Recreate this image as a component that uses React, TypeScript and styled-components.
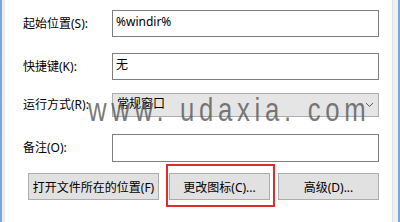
import React from 'react';
import styled, { createGlobalStyle } from 'styled-components';

const GlobalStyle = createGlobalStyle`
  html, body {
    margin: 0;
    padding: 0;
    width: 400px;
    height: 222px;
    overflow: hidden;
    background: #ffffff;
  }
  body {
    font-family: "Noto Sans", "Noto Sans CJK SC", sans-serif;
    font-size: 12px;
    color: #000;
  }
`;

const Frame = styled.div`
  position: relative;
  display: flex;
  width: 400px;
  height: 222px;
`;

const LeftEdge = styled.div`
  width: 3px;
  border-left: 2px solid #7aa7dc;
  background: #ededed;
`;

const RightEdge = styled.div`
  width: 5px;
  border-left: 1px solid #e2e2e2;
  border-right: 2px solid #7aa7dc;
  background: #f0f0f0;
`;

const Panel = styled.div`
  flex: 1;
  background: #ffffff;
  padding: 10px 13px 0 18px;
  display: flex;
  flex-direction: column;
`;

const Row = styled.div<{ $top: number }>`
  display: grid;
  grid-template-columns: 89px 1fr;
  align-items: center;
  margin-top: ${({ $top }) => $top}px;
`;

const Label = styled.span`
  line-height: 16px;
  white-space: nowrap;
`;

const TextBox = styled.div<{ $h: number }>`
  box-sizing: border-box;
  height: ${({ $h }) => $h}px;
  border: 1px solid #7f7f7f;
  background: #fff;
  padding: 2px 3px 0;
  line-height: 18px;
`;

const Combo = styled.div`
  box-sizing: border-box;
  height: 24px;
  border: 1px solid #adadad;
  background: #e5e5e5;
  padding: 1px 4px 4px;
  display: flex;
  align-items: center;
  justify-content: space-between;
  line-height: 18px;
`;

const Chevron = styled.svg`
  width: 9px;
  height: 6px;
  margin-top: 3px;
`;

const Buttons = styled.div`
  display: flex;
  margin-top: 11px;
  padding-left: 5px;
`;

const Button = styled.div<{ $w: number; $gap: number }>`
  position: relative;
  box-sizing: border-box;
  width: ${({ $w }) => $w}px;
  height: 27px;
  margin-left: ${({ $gap }) => $gap}px;
  border: 1px solid #adadad;
  background: #e1e1e1;
  display: flex;
  align-items: center;
  justify-content: center;
  white-space: nowrap;
`;

const Highlight = styled.span`
  position: absolute;
  left: -4px;
  right: -6px;
  top: -10px;
  bottom: -8px;
  border: 2px solid #e32b2b;
  pointer-events: none;
`;

const Watermark = styled.div`
  position: absolute;
  left: 88px;
  top: 91px;
  font-family: "Liberation Sans", Arial, sans-serif;
  font-size: 33px;
  letter-spacing: 6px;
  color: rgba(85, 85, 85, 0.78);
  white-space: nowrap;
  transform: scaleX(0.78);
  transform-origin: left top;
  pointer-events: none;
`;

export default function App() {
  return (
    <>
      <GlobalStyle />
      <Frame>
        <LeftEdge />
        <Panel>
          <Row $top={0}>
            <Label>起始位置(S):</Label>
            <TextBox $h={27}>%windir%</TextBox>
          </Row>
          <Row $top={16}>
            <Label>快捷键(K):</Label>
            <TextBox $h={27}>无</TextBox>
          </Row>
          <Row $top={13}>
            <Label>运行方式(R):</Label>
            <Combo>
              <span>常规窗口</span>
              <Chevron viewBox="0 0 9 6">
                <path d="M1 1 L4.5 4.5 L8 1" fill="none" stroke="#5a5a5a" strokeWidth="1" />
              </Chevron>
            </Combo>
          </Row>
          <Row $top={17}>
            <Label>备注(O):</Label>
            <TextBox $h={28} />
          </Row>
          <Buttons>
            <Button $w={131} $gap={0}>打开文件所在的位置(F)</Button>
            <Button $w={101} $gap={10}>
              更改图标(C)...
              <Highlight />
            </Button>
            <Button $w={101} $gap={8}>高级(D)...</Button>
          </Buttons>
        </Panel>
        <RightEdge />
        <Watermark>www. udaxia. com</Watermark>
      </Frame>
    </>
  );
}
